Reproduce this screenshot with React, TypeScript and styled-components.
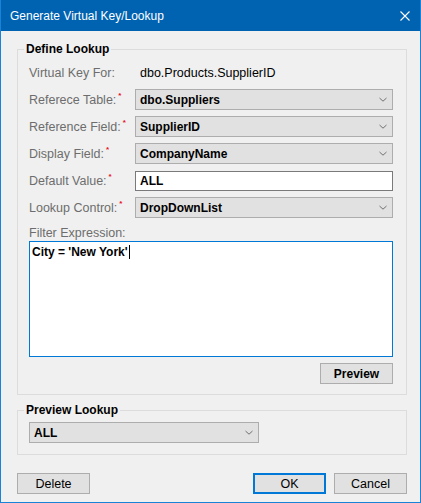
import React from 'react';
import styled, { createGlobalStyle } from 'styled-components';

const GlobalStyle = createGlobalStyle`
  html, body {
    margin: 0;
    padding: 0;
    background: #ffffff;
  }
  * { box-sizing: border-box; }
`

const FONT = `"Liberation Sans", Arial, sans-serif`

const Window = styled.div`
  width: 421px;
  height: 503px;
  display: flex;
  flex-direction: column;
  background: #f0f0f0;
  border: 1px solid #1883d7;
  border-top: none;
  font-family: ${FONT};
  overflow: hidden;
`

const TitleBar = styled.div`
  height: 31px;
  flex-shrink: 0;
  margin: 0 -1px;
  padding: 0 11px 0 10px;
  background: #0063b1;
  color: #ffffff;
  display: flex;
  align-items: center;
  justify-content: space-between;
  font-size: 12px;
`

const Body = styled.div`
  flex: 1;
  display: flex;
  flex-direction: column;
  padding: 0 13px 0 16px;
`

const Group = styled.fieldset<{ $top: number; $padTop: number; $padBottom: number }>`
  margin: ${p => p.$top}px 0 0 0;
  padding: ${p => p.$padTop}px 13px ${p => p.$padBottom}px 11px;
  border: 1px solid #dcdcdc;
  min-width: 0;
  legend {
    margin-left: -5px;
    padding: 0 2px;
    font-size: 12px;
    line-height: 14px;
    font-weight: bold;
    color: #000000;
  }
`

const FormGrid = styled.div`
  display: grid;
  grid-template-columns: 106px 1fr;
  grid-auto-rows: 21px;
  row-gap: 6px;
  align-items: center;
`

const Label = styled.div`
  color: #6d6d6d;
  font-size: 12.5px;
  white-space: nowrap;
  display: flex;
  align-items: flex-start;
`

const Required = styled.span`
  color: #e81123;
  font-size: 8px;
  font-weight: bold;
  line-height: 8px;
  margin-left: 2px;
  margin-top: -1px;
`

const Value = styled.div`
  color: #000000;
  font-size: 12.5px;
  padding-left: 5px;
`

const Combo = styled.div<{ $width?: number }>`
  height: 21px;
  width: ${p => (p.$width ? `${p.$width}px` : '100%')};
  background: #e1e1e1;
  border: 1px solid #adadad;
  display: flex;
  align-items: center;
  justify-content: space-between;
  padding: 0 5px 0 4px;
  font-size: 12px;
  font-weight: bold;
  color: #000000;
`

const TextBox = styled.div`
  height: 20px;
  background: #ffffff;
  border: 1px solid #7a7a7a;
  display: flex;
  align-items: center;
  padding: 0 4px;
  font-size: 12px;
  font-weight: bold;
  color: #000000;
`

const FilterLabel = styled(Label)`
  margin-top: 7px;
  height: 15px;
  align-items: center;
`

const TextArea = styled.div`
  margin-top: 1px;
  height: 116px;
  background: #ffffff;
  border: 1px solid #0078d7;
  padding: 3px 2px;
  font-size: 12px;
  font-weight: bold;
  color: #000000;
  line-height: 14px;
`

const Caret = styled.span`
  display: inline-block;
  width: 1px;
  height: 14px;
  background: #000000;
  vertical-align: top;
  margin-left: 1px;
`

const ButtonRow = styled.div<{ $top: number }>`
  display: flex;
  justify-content: space-between;
  align-items: center;
  margin-top: ${p => p.$top}px;
`

const Actions = styled.div`
  display: flex;
  gap: 8px;
`

const Button = styled.button<{ $bold?: boolean; $focused?: boolean; $width?: number }>`
  width: ${p => p.$width ?? 73}px;
  height: 21px;
  margin: 0;
  padding: 0;
  background: #e1e1e1;
  border: ${p => (p.$focused ? '2px solid #0078d7' : '1px solid #adadad')};
  font-family: ${FONT};
  font-size: ${p => (p.$bold ? '12px' : '12.5px')};
  font-weight: ${p => (p.$bold ? 'bold' : 'normal')};
  color: #000000;
`

const Chevron = () => (
  <svg width="8" height="5" viewBox="0 0 8 5">
    <polyline points="0.5,1 4,4.2 7.5,1" fill="none" stroke="#707070" strokeWidth="1" />
  </svg>
)

const CloseIcon = () => (
  <svg width="10" height="10" viewBox="0 0 10 10">
    <path d="M0.5 0.5 L9.5 9.5 M9.5 0.5 L0.5 9.5" stroke="#ffffff" strokeWidth="1.1" />
  </svg>
)

const fields = [
  { label: 'Referece Table:', value: 'dbo.Suppliers', type: 'combo' },
  { label: 'Reference Field:', value: 'SupplierID', type: 'combo' },
  { label: 'Display Field:', value: 'CompanyName', type: 'combo' },
  { label: 'Default Value:', value: 'ALL', type: 'text' },
  { label: 'Lookup Control:', value: 'DropDownList', type: 'combo' },
]

const App = () => {
  return (
    <>
      <GlobalStyle />
      <Window>
        <TitleBar>
          <span>Generate Virtual Key/Lookup</span>
          <CloseIcon />
        </TitleBar>
        <Body>
          <Group $top={11} $padTop={6} $padBottom={10}>
            <legend>Define Lookup</legend>
            <FormGrid>
              <Label>Virtual Key For:</Label>
              <Value>dbo.Products.SupplierID</Value>
              {fields.map(f => (
                <React.Fragment key={f.label}>
                  <Label>{f.label}<Required>*</Required></Label>
                  {f.type === 'combo'
                    ? <Combo><span>{f.value}</span><Chevron /></Combo>
                    : <TextBox>{f.value}</TextBox>}
                </React.Fragment>
              ))}
            </FormGrid>
            <FilterLabel>Filter Expression:</FilterLabel>
            <TextArea>City = 'New York'<Caret /></TextArea>
            <ButtonRow $top={6}>
              <span />
              <Button $bold>Preview</Button>
            </ButtonRow>
          </Group>
          <Group $top={8} $padTop={5} $padBottom={11}>
            <legend>Preview Lookup</legend>
            <Combo $width={230}><span>ALL</span><Chevron /></Combo>
          </Group>
          <ButtonRow $top={18}>
            <Button>Delete</Button>
            <Actions>
              <Button $focused>OK</Button>
              <Button>Cancel</Button>
            </Actions>
          </ButtonRow>
        </Body>
      </Window>
    </>
  );
};

export default App;
